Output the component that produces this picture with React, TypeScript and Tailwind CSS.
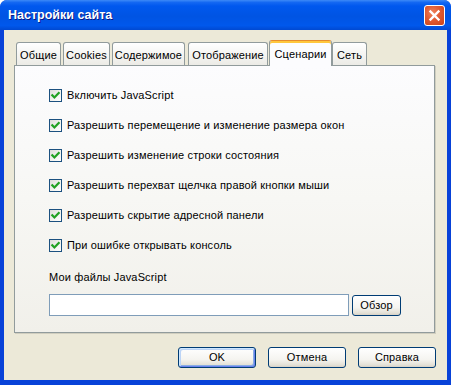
import React from "react";

const checks = [
  "Включить JavaScript",
  "Разрешить перемещение и изменение размера окон",
  "Разрешить изменение строки состояния",
  "Разрешить перехват щелчка правой кнопки мыши",
  "Разрешить скрытие адресной панели",
  "При ошибке открывать консоль",
];

const tabs = [
  { label: "Общие", w: "w-[45px]", ml: "ml-[2px]" },
  { label: "Cookies", w: "w-[47px]", ml: "ml-[2px]" },
  { label: "Содержимое", w: "w-[73px]", ml: "ml-[2px]" },
  { label: "Отображение", w: "w-[80px]", ml: "ml-[3px]" },
  { label: "Сценарии", w: "w-[63px]", ml: "ml-[1px]", active: true },
  { label: "Сеть", w: "w-[35px]", ml: "ml-0" },
];

function CheckBox() {
  return (
    <div className="w-[13px] h-[13px] shrink-0 border border-[#1C5180] bg-[linear-gradient(135deg,#dcdcd7_0%,#f4f4f0_60%,#ffffff_100%)] flex items-center justify-center">
      <svg width="11" height="11" viewBox="0 0 11 11">
        <path d="M2.3 5.2 L4.4 7.4 L8.7 3" fill="none" stroke="#21A121" strokeWidth="2.2" strokeLinecap="square" />
      </svg>
    </div>
  );
}

function XpButton({ label, def }: { label: string; def?: boolean }) {
  return (
    <div
      className={
        "w-[78px] h-[21px] rounded-[3px] border border-[#003C74] bg-[linear-gradient(to_bottom,#ffffff_0%,#f5f4f0_60%,#e3e0d6_90%,#d6d0c5_100%)] flex items-center justify-center text-[11px] tracking-[0.15px] text-black " +
        (def
          ? "shadow-[inset_1px_1px_0_#cee7ff,inset_-1px_-1px_0_#6982ee,inset_2px_2px_0_#bcd4f6,inset_-2px_-2px_0_#89ade4]"
          : "")
      }
    >
      {label}
    </div>
  );
}

export default function App() {
  return (
    <div className="w-[451px] h-[385px] font-['Liberation_Sans',Arial,sans-serif]">
      <div className="w-full h-full flex flex-col rounded-t-[7px] bg-[#0842D8] overflow-hidden">
        <div className="h-[30px] shrink-0 flex items-center pl-[8px] pr-[6px] bg-[linear-gradient(to_bottom,#3d8af7_0%,#1468f2_8%,#0058ee_20%,#0054e3_55%,#0058ec_85%,#0049d2_100%)]">
          <span className="text-white font-bold text-[12.5px] leading-none [text-shadow:1px_1px_0_#0a1883]">
            Настройки сайта
          </span>
          <div className="ml-auto w-[21px] h-[21px] rounded-[3px] border border-white bg-[radial-gradient(circle_at_40%_35%,#f0835c_0%,#e05a32_45%,#c7421a_100%)] flex items-center justify-center">
            <svg width="13" height="13" viewBox="0 0 13 13">
              <path d="M2.5 2.5 L10.5 10.5 M10.5 2.5 L2.5 10.5" stroke="#ffffff" strokeWidth="2.4" strokeLinecap="square" />
            </svg>
          </div>
        </div>
        <div className="flex-1 mx-[4px] mb-[5px] bg-[#ECE9D8] flex flex-col pt-[10px] pl-[10px] pr-[12px]">
          <div className="h-[25px] flex items-end relative z-10">
            {tabs.map((t) =>
              t.active ? (
                <div
                  key={t.label}
                  className={`${t.w} ${t.ml} h-[26px] mb-[-1px] rounded-t-[3px] border-x border-t border-x-[#919B9C] border-t-[#E68B2C] bg-[#FCFCFE] shadow-[inset_0_2px_0_#FFC73C] flex items-center justify-center pt-[2px] text-[11px] tracking-[0.15px] text-black`}
                >
                  {t.label}
                </div>
              ) : (
                <div
                  key={t.label}
                  className={`${t.w} ${t.ml} h-[23px] rounded-t-[3px] border-x border-t border-[#919B9C] bg-[linear-gradient(to_bottom,#ffffff_0%,#f7f7f5_40%,#ecebe6_100%)] flex items-center justify-center pt-[2px] text-[11px] tracking-[0.15px] text-black`}
                >
                  {t.label}
                </div>
              )
            )}
          </div>
          <div className="h-[268px] border border-[#919B9C] shadow-[1px_1px_0_#d0cebf] bg-[linear-gradient(to_bottom,#fcfcfe_0%,#f7f7f4_50%,#f1f0ea_100%)] pl-[34px] pt-[23px] flex flex-col">
            <div className="flex flex-col gap-[17px]">
              {checks.map((c) => (
                <div key={c} className="h-[13px] flex items-center gap-[5px] text-[11px] tracking-[0.15px] text-black leading-none">
                  <CheckBox />
                  <span>{c}</span>
                </div>
              ))}
            </div>
            <div className="mt-[19px] h-[13px] leading-[13px] text-[11px] tracking-[0.15px] text-black">Мои файлы JavaScript</div>
            <div className="mt-[10px] flex items-center gap-[3px]">
              <div className="w-[300px] h-[22px] border border-[#7F9DB9] bg-white" />
              <div className="w-[49px] h-[21px] rounded-[3px] border border-[#003C74] bg-[linear-gradient(to_bottom,#ffffff_0%,#f5f4f0_60%,#e3e0d6_90%,#d6d0c5_100%)] flex items-center justify-center text-[11px] tracking-[0.15px] text-black">
                Обзор
              </div>
            </div>
          </div>
          <div className="mt-[14px] flex justify-end gap-[12px] mr-[-1px]">
            <XpButton label="OK" def />
            <XpButton label="Отмена" />
            <XpButton label="Справка" />
          </div>
        </div>
      </div>
    </div>
  );
}
